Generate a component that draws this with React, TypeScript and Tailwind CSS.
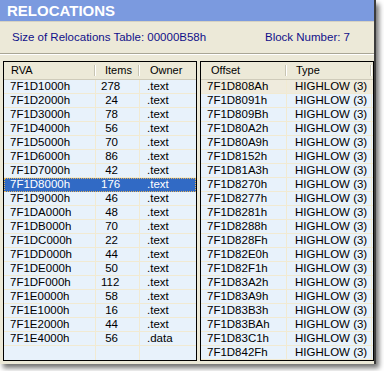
const leftRows: [string, string, string][] = [
  ["7F1D1000h", "278", ".text"],
  ["7F1D2000h", "24", ".text"],
  ["7F1D3000h", "78", ".text"],
  ["7F1D4000h", "56", ".text"],
  ["7F1D5000h", "70", ".text"],
  ["7F1D6000h", "86", ".text"],
  ["7F1D7000h", "42", ".text"],
  ["7F1D8000h", "176", ".text"],
  ["7F1D9000h", "46", ".text"],
  ["7F1DA000h", "48", ".text"],
  ["7F1DB000h", "70", ".text"],
  ["7F1DC000h", "22", ".text"],
  ["7F1DD000h", "44", ".text"],
  ["7F1DE000h", "50", ".text"],
  ["7F1DF000h", "112", ".text"],
  ["7F1E0000h", "58", ".text"],
  ["7F1E1000h", "16", ".text"],
  ["7F1E2000h", "44", ".text"],
  ["7F1E4000h", "56", ".data"],
];

const offsets = [
  "7F1D808Ah", "7F1D8091h", "7F1D809Bh", "7F1D80A2h", "7F1D80A9h",
  "7F1D8152h", "7F1D81A3h", "7F1D8270h", "7F1D8277h", "7F1D8281h",
  "7F1D8288h", "7F1D828Fh", "7F1D82E0h", "7F1D82F1h", "7F1D83A2h",
  "7F1D83A9h", "7F1D83B3h", "7F1D83BAh", "7F1D83C1h", "7F1D842Fh",
];

const SELECTED = 7;

function HeadCell({ label, pad, last }: { label: string; pad: string; last?: boolean }) {
  return (
    <div className={`h-full flex items-center ${pad} relative`}>
      <span>{label}</span>
      {!last && (
        <span className="absolute right-0 top-[3px] bottom-[3px] w-[2px] border-l border-[#C7C4B3] bg-white" />
      )}
    </div>
  );
}

export default function App() {
  return (
    <div
      className="w-[384px] h-[371px] bg-white overflow-hidden"
      style={{ fontFamily: '"Liberation Sans", Arial, sans-serif' }}
    >
      <div className="w-[376px] h-[364px] bg-[#ECE9D8] border-r-2 border-[#3C3C3C] shadow-[3px_4px_5px_rgba(0,0,0,0.55)] flex flex-col">
        <div className="h-[22px] bg-[#7B9ADF] border-b border-[#D6D2C2] flex items-center pl-[7px] text-white font-bold text-[15px] leading-none">
          RELOCATIONS
        </div>

        <div className="h-[31px] flex items-center text-[11.5px] text-[#10108A]">
          <span className="pl-[12px] w-[265px]">Size of Relocations Table: 00000B58h</span>
          <span>Block Number: 7</span>
        </div>

        <div className="h-[2px] border-t border-[#A9A695] border-b border-b-white" />

        <div className="flex gap-[3px] pl-[3px] pt-[6px]">
          {/* left list */}
          <div className="w-[194px] h-[300px] border border-black bg-[#E8F2FB] flex flex-col overflow-hidden">
            <div className="h-[18px] shrink-0 grid grid-cols-[92px_44px_1fr] bg-[#ECE9D8] border-b border-[#CFCBBA] text-[11px] text-black">
              <HeadCell label="RVA" pad="pl-[7px]" />
              <HeadCell label="Items" pad="pl-[9px]" />
              <HeadCell label="Owner" pad="pl-[10px]" last />
            </div>
            <div className="flex-1 flex flex-col text-[11.5px] text-black">
              {leftRows.map(([rva, items, owner], i) => {
                const sel = i === SELECTED;
                return (
                  <div
                    key={rva}
                    className={`h-[14px] shrink-0 grid grid-cols-[92px_44px_1fr] items-center leading-[13px] ${
                      sel
                        ? "bg-[#316AC5] text-white outline outline-1 outline-dotted outline-offset-[-1px] outline-[#E4B45A]"
                        : "border-b border-[#F1EAD2]"
                    }`}
                  >
                    <div className={`h-full pl-[6px] ${sel ? "" : "border-r border-[#F1EAD2]"}`}>{rva}</div>
                    <div className={`h-full pl-[5px] ${sel ? "" : "border-r border-[#F1EAD2]"}`}>
                      <span className="inline-block w-[17px] text-right">{items}</span>
                    </div>
                    <div className="h-full pl-[7px]">{owner}</div>
                  </div>
                );
              })}
              <div className="flex-1 grid grid-cols-[92px_44px_1fr]">
                <div className="border-r border-[#F1EAD2]" />
                <div className="border-r border-[#F1EAD2]" />
                <div />
              </div>
            </div>
          </div>

          {/* right list */}
          <div className="w-[174px] h-[300px] border border-black bg-[#E8F2FB] flex flex-col overflow-hidden">
            <div className="h-[18px] shrink-0 grid grid-cols-[86px_85px_1fr] bg-[#ECE9D8] border-b border-[#CFCBBA] text-[11px] text-black">
              <HeadCell label="Offset" pad="pl-[10px]" />
              <HeadCell label="Type" pad="pl-[9px]" />
              <div />
            </div>
            <div className="flex-1 flex flex-col text-[11.5px] text-black">
              {offsets.map((off, i) => (
                <div
                  key={off}
                  className={`h-[14px] shrink-0 grid grid-cols-[86px_85px_1fr] leading-[13px] border-b border-[#F1EAD2] ${
                    i === 0 ? "bg-[#EFEBDD]" : ""
                  }`}
                >
                  <div className="pl-[6px] border-r border-[#F1EAD2] whitespace-nowrap">{off}</div>
                  <div className="pl-[8px] border-r border-[#F1EAD2] whitespace-nowrap">HIGHLOW (3)</div>
                  <div />
                </div>
              ))}
            </div>
          </div>
        </div>
      </div>
    </div>
  );
}
